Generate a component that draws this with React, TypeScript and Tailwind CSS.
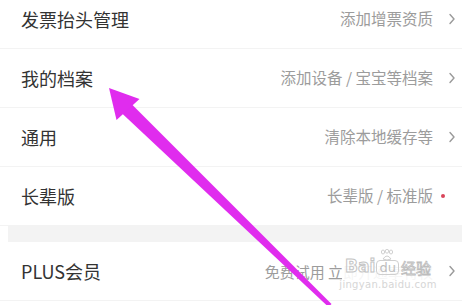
import React from "react";

const font = { fontFamily: '"Noto Sans CJK SC", "Noto Sans", sans-serif' };

function Chevron() {
  return (
    <div className="w-[10px] flex justify-center">
      <svg width="8" height="12" viewBox="0 0 8 12" className="shrink-0">
        <polyline points="2,1.5 6,6 2,10.5" fill="none" stroke="#9a9a9a" strokeWidth="1.4" strokeLinecap="round" strokeLinejoin="round" />
      </svg>
    </div>
  );
}

function Row({ label, value, tail, valueSize = "text-[15.5px]" }: { label: string; value: React.ReactNode; tail: React.ReactNode; valueSize?: string }) {
  return (
    <div className="h-[59px] flex items-center justify-between pl-[21px] pr-[5px] border-b border-[#f3f3f3]">
      <span className="text-[18px] text-[#333333] leading-none">{label}</span>
      <div className="flex items-center gap-[14px]">
        <span className={`${valueSize} text-[#9c9c9c] leading-none`}>{value}</span>
        {tail}
      </div>
    </div>
  );
}

export default function App() {
  return (
    <div className="relative w-[462px] h-[305px] overflow-hidden bg-white" style={font}>
      <div className="flex flex-col -mt-[10px]">
        <Row label="发票抬头管理" value="添加增票资质" tail={<Chevron />} />
        <Row label="我的档案" value="添加设备 / 宝宝等档案" tail={<Chevron />} />
        <Row label="通用" value="清除本地缓存等" tail={<Chevron />} />
        <Row
          label="长辈版"
          value="长辈版 / 标准版"
          tail={
            <div className="w-[10px] flex">
              <span className="block w-[4px] h-[4px] rounded-full bg-[#d9455a] -ml-[6px]" />
            </div>
          }
        />
        <div className="h-[16px] bg-[#f3f3f3] ml-[8px]" />
        <div className="relative">
          <Row label="PLUS会员" value="免费试用 立即开通享特权" valueSize="text-[15px]" tail={<Chevron />} />
          <div className="absolute left-[342px] top-[12px] w-[92px] h-[46px] bg-white/90 flex flex-col items-center">
            <div className="flex items-end leading-none mt-[4px]">
              <span className="text-[17px] font-bold" style={{ color: "transparent", WebkitTextStroke: "1px #c4c4c4", fontFamily: '"DejaVu Sans", sans-serif' }}>Bai</span>
              <span className="relative mx-[1px] px-[2px] border border-[#cfcfcf] rounded-[4px] text-[13px] text-[#bdbdbd]" style={{ fontFamily: '"DejaVu Sans", sans-serif' }}>
                du
                <svg className="absolute -top-[12px] left-[2px]" width="16" height="12" viewBox="0 0 16 12">
                  <g fill="none" stroke="#d0d0d0" strokeWidth="1">
                    <ellipse cx="4" cy="3" rx="1.6" ry="2" />
                    <ellipse cx="8" cy="2.2" rx="1.6" ry="2" />
                    <ellipse cx="12" cy="3" rx="1.6" ry="2" />
                    <path d="M4 10 Q8 4 12 10 Q8 12 4 10 Z" />
                  </g>
                </svg>
              </span>
              <span className="text-[15px] ml-[1px]" style={{ color: "transparent", WebkitTextStroke: "0.8px #bdbdbd" }}>经验</span>
            </div>
            <span className="text-[10px] tracking-[0.3px] text-[#d6d6d6] leading-none mt-[5px]" style={{ fontFamily: '"DejaVu Sans", sans-serif' }}>jingyan.baidu.com</span>
          </div>
        </div>
      </div>
      <svg className="absolute inset-0 pointer-events-none" width="462" height="305" viewBox="0 0 462 305">
        <polygon points="120.5,112 129.5,102 331.5,304 328.5,307" fill="#e02cee" />
        <polygon points="109,88 139.5,99 116.5,120" fill="#e02cee" />
      </svg>
    </div>
  );
}
